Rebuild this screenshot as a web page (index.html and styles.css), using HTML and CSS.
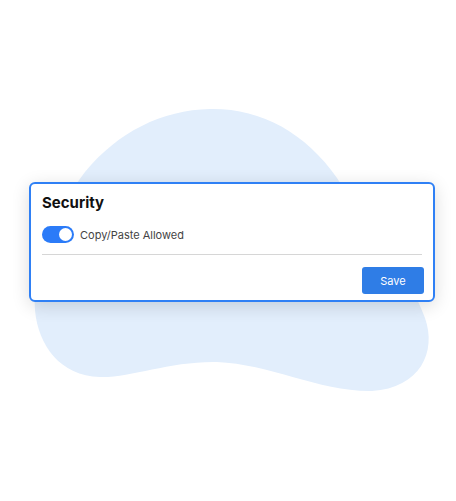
FILE: index.html
```html
<!DOCTYPE html>
<html lang="en">
<head>
    <meta charset="UTF-8">
    <meta name="viewport" content="width=device-width, initial-scale=1.0">
    <title>Security</title>
    <link rel="stylesheet" href="styles.css">
</head>
<body>
    <div class="scene">
        <svg class="blob" width="456" height="501" viewBox="0 0 456 501">
            <path d="M 210 109
                     C 260 108, 305 132, 337 178
                     C 370 230, 410 275, 425 318
                     C 437 352, 420 388, 372 391
                     C 320 392, 270 364, 217 362
                     C 170 361, 130 378, 100 377
                     C 60 376, 38 345, 35 310
                     C 32 262, 55 212, 85 172
                     C 118 132, 162 110, 210 109 Z" fill="#e2eefc"/>
        </svg>

        <div class="card">
            <h2 class="title">Security</h2>
            <label class="option">
                <span class="toggle"><span class="knob"></span></span>
                <span class="option-text">Copy/Paste Allowed</span>
            </label>
            <div class="divider"></div>
            <div class="actions">
                <button class="save">Save</button>
            </div>
        </div>
    </div>
</body>
</html>
```

FILE: styles.css
```css
body {
    margin: 0;
    background-color: #fff;
    font-family: Inter, "Open Sans", sans-serif;
}
.scene {
    position: relative;
    width: 456px;
    height: 501px;
    overflow: hidden;
    padding-top: 182px;
    box-sizing: border-box;
}
.blob {
    position: absolute;
    top: 0;
    left: 0;
}
.card {
    position: relative;
    width: 406px;
    margin-left: 29px;
    box-sizing: border-box;
    background-color: #fff;
    border: 2px solid #2f80f5;
    border-radius: 6px;
    padding: 8px 9px 6px 11px;
    box-shadow: 0 4px 18px rgba(0, 0, 0, 0.14);
}
.title {
    margin: 0;
    font-size: 15px;
    font-weight: 700;
    line-height: 22px;
    color: #111;
}
.option {
    display: flex;
    align-items: center;
    gap: 6px;
    margin-top: 12px;
}
.toggle {
    display: flex;
    align-items: center;
    justify-content: flex-end;
    width: 32px;
    height: 17px;
    padding: 2px;
    box-sizing: border-box;
    border-radius: 9px;
    background-color: #2b7bf8;
}
.knob {
    width: 13px;
    height: 13px;
    border-radius: 50%;
    background-color: #fff;
}
.option-text {
    font-size: 11px;
    color: #444;
}
.divider {
    height: 1px;
    margin: 11px 2px 0 0;
    background-color: #d6d6d6;
}
.actions {
    display: flex;
    justify-content: flex-end;
    margin-top: 12px;
}
.save {
    width: 62px;
    height: 27px;
    border: none;
    border-radius: 3px;
    background-color: #2f7de6;
    color: #fff;
    font-family: inherit;
    font-size: 11px;
    cursor: pointer;
}
```
